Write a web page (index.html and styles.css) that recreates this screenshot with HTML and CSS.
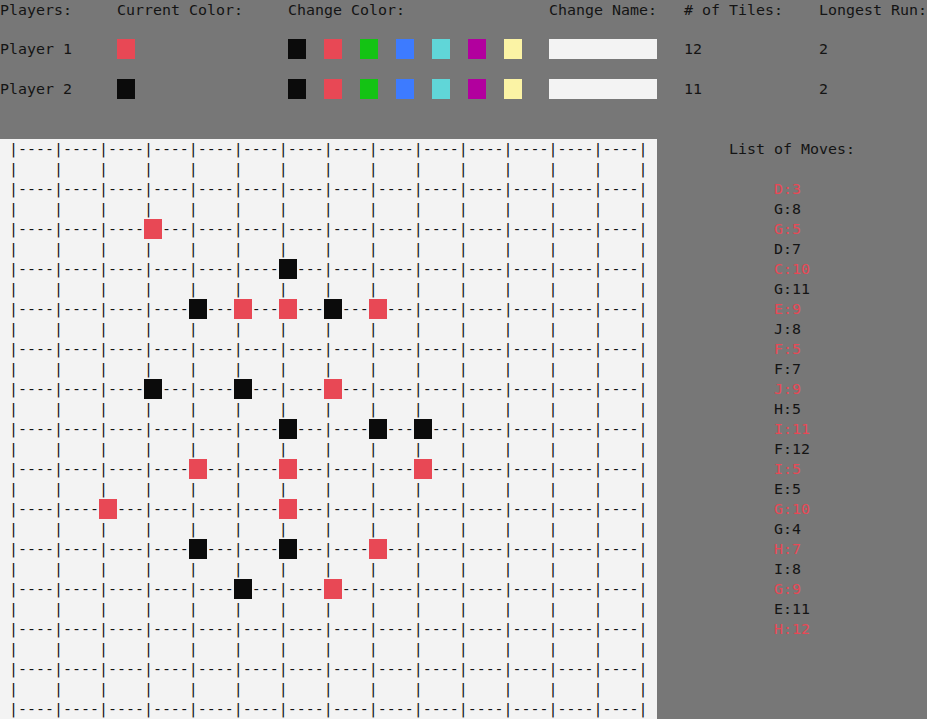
FILE: index.html
```html
<!DOCTYPE html>
<html>
<head>
<meta charset="utf-8">
<title>Tiles</title>
<link rel="stylesheet" href="styles.css">
</head>
<body>
<div class="header">
  <div class="hrow titles">
    <div>Players:</div>
    <div>Current Color:</div>
    <div>Change Color:</div>
    <div>Change Name:</div>
    <div># of Tiles:</div>
    <div>Longest Run:</div>
  </div>
  <div class="hrow player">
    <div>Player 1</div>
    <div><span class="sw red"></span></div>
    <div class="palette">
      <span class="sw black"></span><span class="sw red"></span><span class="sw green"></span><span class="sw blue"></span><span class="sw cyan"></span><span class="sw magenta"></span><span class="sw yellow"></span>
    </div>
    <div><input class="name" type="text" value=""></div>
    <div>12</div>
    <div>2</div>
  </div>
  <div class="hrow player">
    <div>Player 2</div>
    <div><span class="sw black"></span></div>
    <div class="palette">
      <span class="sw black"></span><span class="sw red"></span><span class="sw green"></span><span class="sw blue"></span><span class="sw cyan"></span><span class="sw magenta"></span><span class="sw yellow"></span>
    </div>
    <div><input class="name" type="text" value=""></div>
    <div>11</div>
    <div>2</div>
  </div>
</div>
<div class="main">
  <div class="board">
<div class="brow"> |----|----|----|----|----|----|----|----|----|----|----|----|----|----|</div>
<div class="brow"> |    |    |    |    |    |    |    |    |    |    |    |    |    |    |</div>
<div class="brow"> |----|----|----|----|----|----|----|----|----|----|----|----|----|----|</div>
<div class="brow"> |    |    |    |    |    |    |    |    |    |    |    |    |    |    |</div>
<div class="brow"> |----|----|----<span class="p red"></span>---|----|----|----|----|----|----|----|----|----|----|</div>
<div class="brow"> |    |    |    |    |    |    |    |    |    |    |    |    |    |    |</div>
<div class="brow"> |----|----|----|----|----|----<span class="p black"></span>---|----|----|----|----|----|----|----|</div>
<div class="brow"> |    |    |    |    |    |    |    |    |    |    |    |    |    |    |</div>
<div class="brow"> |----|----|----|----<span class="p black"></span>---<span class="p red"></span>---<span class="p red"></span>---<span class="p black"></span>---<span class="p red"></span>---|----|----|----|----|----|</div>
<div class="brow"> |    |    |    |    |    |    |    |    |    |    |    |    |    |    |</div>
<div class="brow"> |----|----|----|----|----|----|----|----|----|----|----|----|----|----|</div>
<div class="brow"> |    |    |    |    |    |    |    |    |    |    |    |    |    |    |</div>
<div class="brow"> |----|----|----<span class="p black"></span>---|----<span class="p black"></span>---|----<span class="p red"></span>---|----|----|----|----|----|----|</div>
<div class="brow"> |    |    |    |    |    |    |    |    |    |    |    |    |    |    |</div>
<div class="brow"> |----|----|----|----|----|----<span class="p black"></span>---|----<span class="p black"></span>---<span class="p black"></span>---|----|----|----|----|</div>
<div class="brow"> |    |    |    |    |    |    |    |    |    |    |    |    |    |    |</div>
<div class="brow"> |----|----|----|----<span class="p red"></span>---|----<span class="p red"></span>---|----|----<span class="p red"></span>---|----|----|----|----|</div>
<div class="brow"> |    |    |    |    |    |    |    |    |    |    |    |    |    |    |</div>
<div class="brow"> |----|----<span class="p red"></span>---|----|----|----<span class="p red"></span>---|----|----|----|----|----|----|----|</div>
<div class="brow"> |    |    |    |    |    |    |    |    |    |    |    |    |    |    |</div>
<div class="brow"> |----|----|----|----<span class="p black"></span>---|----<span class="p black"></span>---|----<span class="p red"></span>---|----|----|----|----|----|</div>
<div class="brow"> |    |    |    |    |    |    |    |    |    |    |    |    |    |    |</div>
<div class="brow"> |----|----|----|----|----<span class="p black"></span>---|----<span class="p red"></span>---|----|----|----|----|----|----|</div>
<div class="brow"> |    |    |    |    |    |    |    |    |    |    |    |    |    |    |</div>
<div class="brow"> |----|----|----|----|----|----|----|----|----|----|----|----|----|----|</div>
<div class="brow"> |    |    |    |    |    |    |    |    |    |    |    |    |    |    |</div>
<div class="brow"> |----|----|----|----|----|----|----|----|----|----|----|----|----|----|</div>
<div class="brow"> |    |    |    |    |    |    |    |    |    |    |    |    |    |    |</div>
<div class="brow"> |----|----|----|----|----|----|----|----|----|----|----|----|----|----|</div>
  </div>
  <div class="moves">
    <div class="moves-title">List of Moves:</div>
    <div class="move-list">
      <div class="m1">D:3</div>
      <div class="m2">G:8</div>
      <div class="m1">G:5</div>
      <div class="m2">D:7</div>
      <div class="m1">C:10</div>
      <div class="m2">G:11</div>
      <div class="m1">E:9</div>
      <div class="m2">J:8</div>
      <div class="m1">F:5</div>
      <div class="m2">F:7</div>
      <div class="m1">J:9</div>
      <div class="m2">H:5</div>
      <div class="m1">I:11</div>
      <div class="m2">F:12</div>
      <div class="m1">I:5</div>
      <div class="m2">E:5</div>
      <div class="m1">G:10</div>
      <div class="m2">G:4</div>
      <div class="m1">H:7</div>
      <div class="m2">I:8</div>
      <div class="m1">G:9</div>
      <div class="m2">E:11</div>
      <div class="m1">H:12</div>
    </div>
  </div>
</div>
</body>
</html>
```
FILE: styles.css
```css
html, body {
  margin: 0;
  padding: 0;
}
body {
  background: #777777;
  color: #141414;
  font-family: "DejaVu Sans Mono", "Liberation Mono", monospace;
  font-size: 14.95px;
  line-height: 20px;
  overflow: hidden;
  height: 719px;
}
.header {
  height: 139px;
}
.hrow {
  display: grid;
  grid-template-columns: 117px 171px 261px 135px 135px 1fr;
  height: 20px;
  white-space: nowrap;
}
.titles {
  margin-bottom: 19px;
}
.player {
  margin-bottom: 20px;
}
.sw {
  display: block;
  width: 18px;
  height: 20px;
}
.palette {
  display: flex;
  gap: 18px;
}
.name {
  display: block;
  width: 108px;
  height: 20px;
  padding: 0;
  margin: 0;
  border: 0;
  background: #f3f3f3;
  box-sizing: border-box;
}
.black { background: #0b0b0b; }
.red { background: #e84855; }
.green { background: #14c314; }
.blue { background: #3d7bff; }
.cyan { background: #60d6d8; }
.magenta { background: #b2009e; }
.yellow { background: #fbf3a5; }

.main {
  display: flex;
  height: 580px;
}
.board {
  width: 657px;
  flex: none;
  background: #f3f3f3;
  overflow: hidden;
}
.brow {
  height: 20px;
  white-space: pre;
  color: #141414;
}
.p {
  display: inline-block;
  width: 2ch;
  height: 20px;
  vertical-align: top;
}
.moves {
  flex: 1;
  display: flex;
  flex-direction: column;
  align-items: center;
}
.moves-title {
  margin-bottom: 20px;
}
.move-list {
  width: 4ch;
}
.m1 { color: #e84855; }
.m2 { color: #141414; }
```
